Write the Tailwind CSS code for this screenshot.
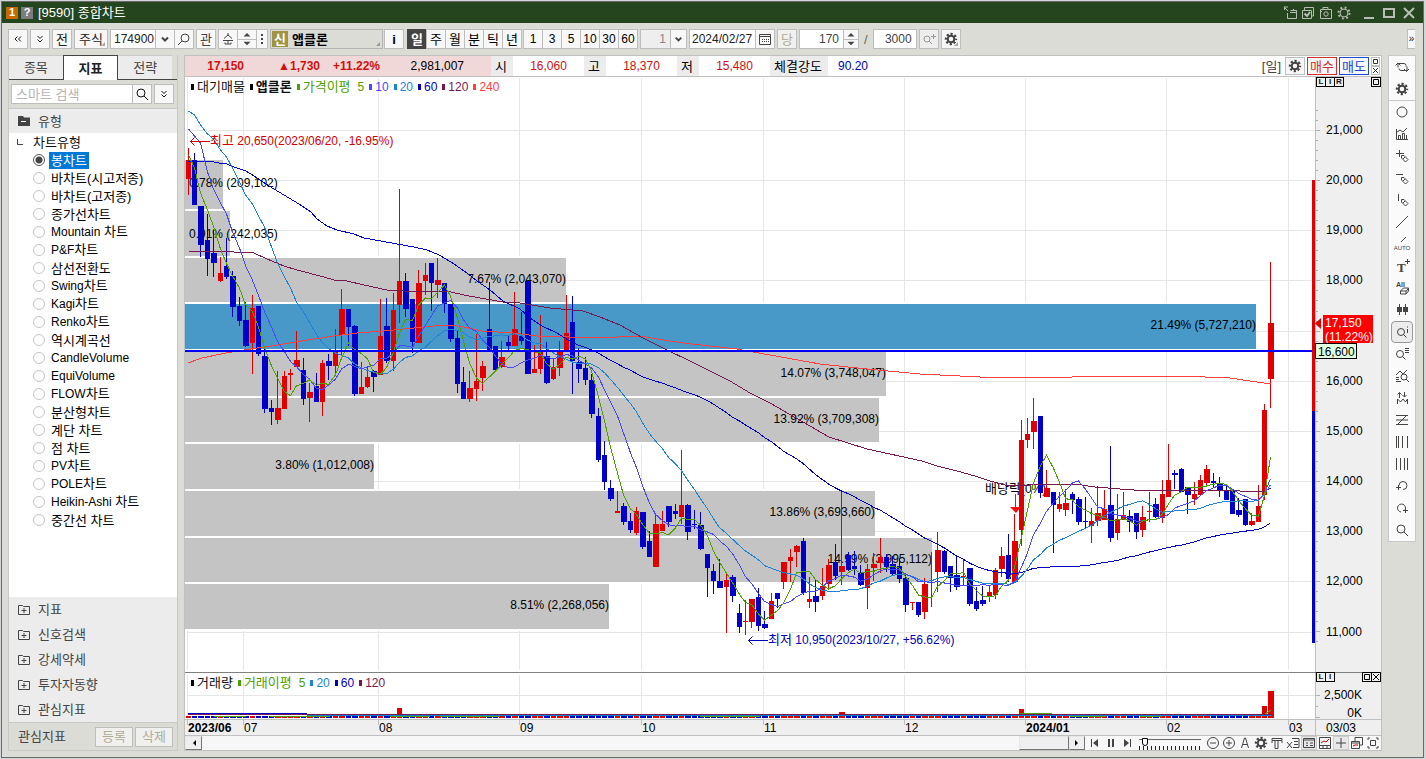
<!DOCTYPE html>
<html lang="ko">
<head>
<meta charset="utf-8">
<title>[9590] 종합차트</title>
<script src="https://cdn.jsdelivr.net/npm/@tailwindcss/browser@4"></script>
</head>
<body class="overflow-hidden bg-[#d3d6d8] font-['Liberation_Sans','Noto_Sans_CJK_KR',sans-serif] text-[13px] leading-none text-[#111]">

<svg width="0" height="0" class="absolute" aria-hidden="true">
  <defs>
    <symbol id="gear" viewBox="0 0 16 16"><g fill="none" stroke="currentColor"><circle cx="8" cy="8" r="3.3" stroke-width="2"/><circle cx="8" cy="8" r="5.1" stroke-width="2.2" stroke-dasharray="2.2 1.8" stroke-dashoffset="1.1"/></g></symbol>
    <symbol id="lens" viewBox="0 0 16 16"><g fill="none" stroke="currentColor"><circle cx="7" cy="7" r="4"/><path d="M10 10l4 4"/></g></symbol>
    <symbol id="pencil" viewBox="0 0 16 16"><path d="M7.500 7.500h2.500l4 4-2.500 2.500-4-4zM9 11l2-2" fill="none" stroke="currentColor"/></symbol>
    <symbol id="chev" viewBox="0 0 16 16"><path d="M5 6.500l3 3 3-3" fill="none" stroke="currentColor" stroke-width="2"/></symbol>
    <symbol id="dbl" viewBox="0 0 16 16"><path d="M5.500 5l2.500 2.500 2.500-2.500M5.500 8.500l2.500 2.500 2.500-2.500" fill="none" stroke="currentColor"/></symbol>
    <symbol id="dblL" viewBox="0 0 16 16"><path d="M7.500 5.500l-2.500 2.500 2.500 2.500M11 5.500l-2.500 2.500 2.500 2.500" fill="none" stroke="currentColor"/></symbol>
    <symbol id="updown" viewBox="0 0 16 20"><path d="M4 7l4-4 4 4zM4 13l4 4 4-4z" fill="currentColor"/></symbol>
    <symbol id="plusbox" viewBox="0 0 12 12"><path d="M.5 10.500v-9h4l1 1h6v8zM6 4v5M3.500 6.500h5" fill="none" stroke="currentColor"/></symbol>
  </defs>
</svg>

<div class="flex h-screen pb-px pl-px pr-0.5 pt-px">
<div class="flex min-w-0 flex-1 flex-col border border-[#6a6a6a] bg-[#dcdcd6]">

  <header class="flex h-[21px] shrink-0 items-center bg-[#25451e] pl-1 pr-2 text-white">
    <span class="flex h-3 w-3 items-center justify-center bg-[#c86a00] text-[11px] font-bold">1</span>
    <button class="ml-[3px] flex h-3 w-3 items-center justify-center bg-[#7c7c7c] text-[11px] font-bold" aria-label="도움말">?</button>
    <h1 class="ml-[5px]">[9590] 종합차트</h1>
    <div class="ml-auto flex items-center gap-1 text-[#b9bdb4]">
      <button aria-label="창 이동"><svg class="size-[14px]" viewBox="0 0 14 14" fill="none" stroke="currentColor"><path d="M4.500 7v5.500h9v-8h-6M7 6.500h6M10.500 4V3" /><path d="M1 1h4M1.500 1v3M1 1l4 4"/></svg></button>
      <button aria-label="선택"><svg class="size-[14px]" viewBox="0 0 14 14" fill="none" stroke="currentColor"><path d="M1.500 4.500h9v8h-9zM3.500 4V1.500h9V10H11"/><path d="M3.500 7.500l2.500 2.500 3-4" stroke-width="2"/></svg></button>
      <button aria-label="캡처"><svg class="size-[14px]" viewBox="0 0 14 14" fill="none" stroke="currentColor"><path d="M1.500 3.500h11v9h-11zM4 3V1.500h5V3M1 5.500h2"/><circle cx="7" cy="8" r="2.200"/></svg></button>
      <button aria-label="설정"><svg class="size-[14px]" viewBox="0 0 14 14" fill="none" stroke="currentColor"><circle cx="7" cy="7" r="4"/><circle cx="7" cy="7" r="5.500" stroke-width="2" stroke-dasharray="1.800 2.520"/></svg></button>
      <button class="ml-2" aria-label="최소화"><svg class="h-[14px] w-3" viewBox="0 0 12 14"><path d="M1 11h10v2H1z" fill="currentColor"/></svg></button>
      <button class="ml-1" aria-label="최대화"><svg class="h-[14px] w-3" viewBox="0 0 12 14"><path d="M1 3h10v8H1z" fill="none" stroke="currentColor" stroke-width="2"/></svg></button>
      <button class="ml-1" aria-label="닫기"><svg class="h-[14px] w-3" viewBox="0 0 12 14"><path d="M1 2l10 10M11 2L1 12" stroke="currentColor" stroke-width="2"/></svg></button>
    </div>
  </header>

  <div class="flex h-8 shrink-0 items-center gap-0.5 pl-1.5 pr-2 text-[#222]" role="toolbar" aria-label="종목 도구">
    <button class="flex h-5 w-5 items-center justify-center border border-[#bdbdbd] bg-[#f7f7f7]" aria-label="접기"><svg class="size-4"><use href="#dblL"/></svg></button>
    <button class="flex h-5 w-5 items-center justify-center border border-[#bdbdbd] bg-[#f7f7f7]" aria-label="펼치기"><svg class="size-4"><use href="#dbl"/></svg></button>
    <button class="flex h-5 w-5 items-center justify-center border border-[#bdbdbd] bg-[#f7f7f7]">전</button>
    <button class="relative flex h-5 w-[34px] items-center justify-center border border-[#bdbdbd] bg-[#f7f7f7]">주식<svg class="absolute bottom-0.5 right-0.5 size-1" viewBox="0 0 4 4"><path d="M4 0v4H0z" fill="#aaa"/></svg></button>
    <div class="flex">
      <input class="h-5 w-[46px] border border-[#bdbdbd] bg-white pl-[3px] text-xs" value="174900" aria-label="종목코드">
      <button class="-ml-px flex h-5 w-5 items-center justify-center border border-[#bdbdbd] bg-[#f7f7f7]" aria-label="종목 목록"><svg class="size-4 text-[#444]"><use href="#chev"/></svg></button>
      <button class="-ml-px flex h-5 w-5 items-center justify-center border border-[#bdbdbd] bg-[#f7f7f7]" aria-label="종목 검색"><svg class="size-4 -scale-x-100 text-[#444]"><use href="#lens"/></svg></button>
    </div>
    <button class="flex h-5 w-5 items-center justify-center border border-[#bdbdbd] bg-[#f7f7f7] text-[#444]">관</button>
    <div class="flex">
      <button class="flex h-5 w-5 items-center justify-center border border-[#bdbdbd] bg-[#f7f7f7]" aria-label="순환"><svg class="size-4" viewBox="0 0 16 16" fill="none" stroke="#444"><path d="M8 2v2L4 7.500M8 4l4 3.500M3 9.500h10M8 9.500V13M5 11.500v1.500h6v-1.500"/></svg></button>
      <button class="-ml-px flex h-5 w-5 items-center justify-center border border-[#bdbdbd] bg-[#f7f7f7] bg-[linear-gradient(#bdbdbd,#bdbdbd)] bg-[length:100%_1px] bg-center bg-no-repeat" aria-label="이전 다음"><svg class="h-[18px] w-3.5 text-[#444]"><use href="#updown"/></svg></button>
      <button class="-ml-px flex h-5 w-3 items-center justify-center border border-[#bdbdbd] bg-[#f7f7f7]" aria-label="더보기"><svg class="h-3.5 w-1" viewBox="0 0 4 14"><path d="M1 2h2v2H1zM1 6h2v2H1zM1 10h2v2H1z" fill="#444"/></svg></button>
    </div>
    <button class="relative flex h-5 w-[113px] items-center gap-1 border border-[#b4b4b4] bg-[#dcdcd6] pl-px font-bold text-black"><span class="flex h-4 w-4 items-center justify-center bg-[#a09440] text-white">신</span>앱클론<svg class="absolute bottom-0.5 right-0.5 size-1" viewBox="0 0 4 4"><path d="M4 0v4H0z" fill="#999"/></svg></button>
    <button class="-ml-px flex h-5 w-5 items-center justify-center border border-[#bdbdbd] bg-[#f7f7f7] font-bold text-black">i</button>
    <div class="ml-px flex text-black">
      <button class="flex h-5 w-5 items-center justify-center bg-[#444] font-bold text-white">일</button>
      <button class="-ml-px flex h-5 w-5 items-center justify-center border border-[#bdbdbd] bg-[#f7f7f7]">주</button>
      <button class="-ml-px flex h-5 w-5 items-center justify-center border border-[#bdbdbd] bg-[#f7f7f7]">월</button>
      <button class="-ml-px flex h-5 w-5 items-center justify-center border border-[#bdbdbd] bg-[#f7f7f7]">분</button>
      <button class="-ml-px flex h-5 w-5 items-center justify-center border border-[#bdbdbd] bg-[#f7f7f7]">틱</button>
      <button class="-ml-px flex h-5 w-5 items-center justify-center border border-[#bdbdbd] bg-[#f7f7f7]">년</button>
    </div>
    <div class="-ml-px flex text-xs text-black">
      <button class="flex h-5 w-5 items-center justify-center border border-[#bdbdbd] bg-[#f7f7f7]">1</button>
      <button class="-ml-px flex h-5 w-5 items-center justify-center border border-[#bdbdbd] bg-[#f7f7f7]">3</button>
      <button class="-ml-px flex h-5 w-5 items-center justify-center border border-[#bdbdbd] bg-[#f7f7f7]">5</button>
      <button class="-ml-px flex h-5 w-5 items-center justify-center border border-[#bdbdbd] bg-[#f7f7f7]">10</button>
      <button class="-ml-px flex h-5 w-5 items-center justify-center border border-[#bdbdbd] bg-[#f7f7f7]">30</button>
      <button class="-ml-px flex h-5 w-5 items-center justify-center border border-[#bdbdbd] bg-[#f7f7f7]">60</button>
    </div>
    <div class="flex">
      <input class="h-5 w-[31px] border border-[#bdbdbd] bg-[#eee] pr-1 text-right text-xs text-[#888]" value="1" aria-label="주기">
      <button class="-ml-px flex h-5 w-[17px] items-center justify-center border border-[#bdbdbd] bg-[#f7f7f7]" aria-label="주기 선택"><svg class="size-4 text-[#444]"><use href="#chev"/></svg></button>
    </div>
    <div class="flex">
      <input class="h-5 w-[67px] border border-[#bdbdbd] bg-white pl-0.5 text-xs" value="2024/02/27" aria-label="날짜">
      <button class="-ml-px flex h-5 w-5 items-center justify-center border border-[#bdbdbd] bg-[#f7f7f7]" aria-label="달력"><svg class="size-3.5" viewBox="0 0 14 14" fill="none" stroke="#444"><path d="M1.500 2.500h11v10h-11zM1 4.500h12"/><path d="M4 7.500h7M4 9.500h7" stroke-dasharray="1 1"/></svg></button>
    </div>
    <button class="flex h-5 w-5 items-center justify-center border border-[#bdbdbd] bg-[#f0f0ee] text-[#b0ac98]">당</button>
    <div class="flex">
      <input class="h-5 w-[45px] border border-[#bdbdbd] bg-white pr-1 text-right text-xs text-[#444]" value="170" aria-label="표시 개수">
      <button class="-ml-px flex h-5 w-4 items-center justify-center border border-[#bdbdbd] bg-[#f7f7f7] bg-[linear-gradient(#bdbdbd,#bdbdbd)] bg-[length:100%_1px] bg-center bg-no-repeat" aria-label="개수 조절"><svg class="h-[18px] w-3.5 text-[#444]"><use href="#updown"/></svg></button>
    </div>
    <span class="px-[3px] text-[#666]">/</span>
    <input class="h-5 w-11 border border-[#bdbdbd] bg-white pr-1 text-right text-xs text-[#444]" value="3000" aria-label="전체 개수">
    <button class="flex h-5 w-5 items-center justify-center border border-[#bdbdbd] bg-[#eee] text-[#999]" aria-label="확대"><svg class="size-4" viewBox="0 0 16 16" fill="none" stroke="currentColor"><circle cx="6" cy="8" r="3"/><path d="M8 10l3 3M12.500 3v5M10 5.500h5"/></svg></button>
    <button class="relative flex h-5 w-5 items-center justify-center border border-[#bdbdbd] bg-[#f7f7f7] text-[#444]" aria-label="설정"><svg class="size-4"><use href="#gear"/></svg><svg class="absolute bottom-0.5 right-0.5 size-1" viewBox="0 0 4 4"><path d="M4 0v4H0z" fill="#aaa"/></svg></button>
    <button class="ml-auto flex h-5 w-2 items-center justify-center overflow-hidden border border-r-0 border-[#bdbdbd] bg-[#f7f7f7] text-[10px]" aria-label="더보기">»</button>
  </div>

  <main class="flex min-h-0 flex-1 gap-1.5 pb-1.5 pl-1.5 pr-[7px]">

    <aside class="flex w-[170px] shrink-0 flex-col border-x border-b border-[#c8c8c8]">
      <nav class="flex h-[25px] shrink-0 border-b border-[#444] pr-[5px] text-[#444]" aria-label="탭">
        <button class="flex-1 border-t border-[#c8c8c8] bg-[#ececec]">종목</button>
        <button class="-mb-px flex-1 border border-b-0 border-[#444] bg-white font-bold text-[#222]">지표</button>
        <button class="flex-1 border-t border-[#c8c8c8] bg-[#ececec]">전략</button>
      </nav>
      <form class="flex h-[28px] shrink-0 items-center px-0.5">
        <input class="h-5 min-w-0 flex-1 border border-[#bdbdbd] bg-white pl-1 placeholder:text-[#b5b5b5]" placeholder="스마트 검색" aria-label="스마트 검색">
        <button type="button" class="-ml-px flex h-5 w-5 items-center justify-center border border-[#bdbdbd] bg-[#f7f7f7]" aria-label="검색"><svg class="size-4"><use href="#lens"/></svg></button>
        <button type="button" class="ml-0.5 mr-px flex h-5 w-5 items-center justify-center border border-[#bdbdbd] bg-[#f7f7f7]" aria-label="펼치기"><svg class="size-4"><use href="#dbl"/></svg></button>
      </form>
      <button class="flex h-[25px] shrink-0 items-center gap-2 border-t border-[#c8c8c8] bg-[#ececec] pl-[9px] text-[#444]"><svg class="size-3" viewBox="0 0 12 12"><path d="M0 1h5l1 1.500h6V11H0z" fill="#444"/><path d="M3 6.500h5" stroke="#fff"/></svg>유형</button>
      <fieldset class="min-h-0 flex-1 overflow-hidden bg-white">
        <div class="flex h-[18px] items-center pl-2"><svg class="mr-2.5 size-1.5" viewBox="0 0 6 6"><path d="M.5 0v5.500H6" fill="none" stroke="#444"/></svg>차트유형</div>
        <div id="types"></div>
      </fieldset>
      <div id="sections" class="shrink-0 bg-[#ececec] text-[#444]"></div>
      <div class="flex h-[28px] shrink-0 items-center gap-0.5 border-t border-[#c8c8c8] pl-[9px] pr-1 text-[#444]">
        <span class="mr-auto">관심지표</span>
        <button class="h-5 w-[38px] border border-[#bdbdbd] bg-[#f0f0ee] text-[#b0ac98]">등록</button>
        <button class="h-5 w-[38px] border border-[#bdbdbd] bg-[#f0f0ee] text-[#b0ac98]">삭제</button>
      </div>
    </aside>

    <section class="flex min-w-0 flex-1 flex-col border border-[#c0c0c0] bg-white">
      <div class="flex h-[21px] shrink-0 items-stretch border-b border-[#c0c0c0] text-black">
        <div class="flex w-[306px] items-center bg-[#f0d8d8] text-xs">
          <b class="w-[59px] text-right text-[#d01010]">17,150</b>
          <b class="ml-6 w-[52px] text-right text-[#d01010]">▲1,730</b>
          <b class="ml-2 w-[52px] text-right text-[#d01010]">+11.22%</b>
          <span class="w-[84px] text-right">2,981,007</span>
        </div>
        <span class="flex w-[22px] items-center bg-[#ececec] pl-1">시</span>
        <span class="flex w-[71px] items-center justify-center text-xs text-[#d01010]">16,060</span>
        <span class="flex w-[22px] items-center bg-[#ececec] pl-1">고</span>
        <span class="flex w-[71px] items-center justify-center text-xs text-[#d01010]">18,370</span>
        <span class="flex w-[22px] items-center bg-[#ececec] pl-1">저</span>
        <span class="flex w-[71px] items-center justify-center text-xs text-[#d01010]">15,480</span>
        <span class="flex w-[58px] items-center bg-[#ececec] pl-1">체결강도</span>
        <span class="flex w-[50px] items-center justify-center text-xs text-[#0000b8]">90.20</span>
        <div class="ml-auto flex items-center gap-0.5 pr-px">
          <span class="mr-0.5 text-[#444]">[일]</span>
          <button class="flex h-[18px] w-5 items-center justify-center border border-[#bdbdbd] bg-[#f7f7f7] text-[#444]" aria-label="차트 설정"><svg class="size-4"><use href="#gear"/></svg></button>
          <button class="h-[18px] w-[30px] border border-[#d03030] bg-[#f7f7f7] text-[#d03030]">매수</button>
          <button class="h-[18px] w-[30px] border border-[#2048d0] bg-[#f7f7f7] text-[#2048d0]">매도</button>
          <span class="flex flex-col">
            <button class="flex size-[9px] items-center justify-center border border-[#bdbdbd]" aria-label="최대화"><svg class="size-[5px]" viewBox="0 0 5 5"><path d="M.5.5h4v4h-4z" fill="none" stroke="#333"/></svg></button>
            <button class="flex size-[9px] items-center justify-center border border-[#bdbdbd]" aria-label="닫기"><svg class="size-[5px]" viewBox="0 0 5 5"><path d="M0 0l5 5M5 0L0 5" stroke="#333"/></svg></button>
          </span>
        </div>
      </div>

      <div class="relative min-h-0 flex-1">
        <svg id="chart" class="block h-full w-full" viewBox="185 77 1196 659" preserveAspectRatio="xMinYMin meet" font-size="12" role="img" aria-label="앱클론 일봉 차트"></svg>
        <div class="absolute left-1.5 top-px flex gap-[5px] text-xs">
          <span class="flex items-center gap-[3px] text-[13px]"><i class="h-1.5 w-[3px] bg-black"></i>대기매물</span>
          <span class="flex items-center gap-[3px] text-[13px] font-bold"><i class="h-1.5 w-[3px] bg-black"></i>앱클론</span>
          <span class="flex items-center gap-[3px] text-[#4da000]"><i class="h-1.5 w-[3px] bg-[#4da000]"></i><span class="text-[13px]">가격이평</span><span class="ml-1">5</span></span>
          <span class="flex items-center gap-[3px] text-[#4848ff]"><i class="h-1.5 w-[3px] bg-[#4848ff]"></i>10</span>
          <span class="flex items-center gap-[3px] text-[#1c84d8]"><i class="h-1.5 w-[3px] bg-[#1c84d8]"></i>20</span>
          <span class="flex items-center gap-[3px] text-[#0000c8]"><i class="h-1.5 w-[3px] bg-[#0000c8]"></i>60</span>
          <span class="flex items-center gap-[3px] text-[#781850]"><i class="h-1.5 w-[3px] bg-[#781850]"></i>120</span>
          <span class="flex items-center gap-[3px] text-[#ff4040]"><i class="h-1.5 w-[3px] bg-[#ff4040]"></i>240</span>
        </div>
        <div class="absolute left-1.5 top-[597px] flex gap-[5px] text-xs">
          <span class="flex items-center gap-[3px] text-[13px]"><i class="h-1.5 w-[3px] bg-black"></i>거래량</span>
          <span class="flex items-center gap-[3px] text-[#4da000]"><i class="h-1.5 w-[3px] bg-[#4da000]"></i><span class="text-[13px]">거래이평</span><span class="ml-1">5</span></span>
          <span class="flex items-center gap-[3px] text-[#1c84d8]"><i class="h-1.5 w-[3px] bg-[#1c84d8]"></i>20</span>
          <span class="flex items-center gap-[3px] text-[#0000c8]"><i class="h-1.5 w-[3px] bg-[#0000c8]"></i>60</span>
          <span class="flex items-center gap-[3px] text-[#781850]"><i class="h-1.5 w-[3px] bg-[#781850]"></i>120</span>
        </div>
        <div class="absolute right-0 top-0 flex w-[65px] text-[8px] font-bold">
          <button class="flex h-[10px] w-[10px] items-center justify-center border border-black bg-[#efefef]">L</button>
          <button class="-ml-px flex h-[10px] w-[10px] items-center justify-center border border-black bg-[#efefef]">I</button>
          <button class="-ml-px flex h-[10px] w-[10px] items-center justify-center border border-black bg-[#efefef]">R</button>
          <button class="ml-auto flex size-[10px] items-center justify-center border border-black" aria-label="확대"><svg class="size-1.5" viewBox="0 0 6 6"><path d="M.5.5h5v5h-5z" fill="none" stroke="#000"/></svg></button>
        </div>
        <div class="absolute right-0 top-[595px] flex w-[65px] text-[8px] font-bold">
          <button class="flex h-[10px] w-[10px] items-center justify-center border border-black bg-[#efefef]">L</button>
          <button class="-ml-px flex h-[10px] w-[10px] items-center justify-center border border-black bg-[#efefef]">I</button>
          <button class="ml-auto flex size-[10px] items-center justify-center border border-black" aria-label="확대"><svg class="size-1.5" viewBox="0 0 6 6"><path d="M.5.5h5v5h-5z" fill="none" stroke="#000"/></svg></button>
          <button class="-ml-px flex size-[10px] items-center justify-center border border-black" aria-label="닫기"><svg class="size-1.5" viewBox="0 0 6 6"><path d="M0 0l6 6M6 0L0 6" stroke="#000"/></svg></button>
        </div>
      </div>

      <div class="flex h-[14px] shrink-0 items-stretch bg-[#f7f7f7] text-[#444]">
        <button class="flex w-[17px] items-center justify-center border border-[#e8e8e8] border-b-[#777] border-r-[#777] bg-[#efefef]" aria-label="왼쪽"><svg class="size-2" viewBox="0 0 8 8"><path d="M6 1v6L3 4z" fill="#000"/></svg></button>
        <div class="flex flex-1 justify-end bg-[#f7f7f7]"><div class="w-[50px] border border-[#e8e8e8] border-b-[#777] border-r-[#777] bg-[#efefef]"></div></div>
        <button class="flex w-4 items-center justify-center border border-[#e8e8e8] border-b-[#777] border-r-[#777] bg-[#efefef]" aria-label="오른쪽"><svg class="size-2" viewBox="0 0 8 8"><path d="M2 1v6l3-3z" fill="#000"/></svg></button>
        <div class="flex items-center gap-2 pl-1.5">
          <button aria-label="처음"><svg class="h-2 w-2" viewBox="0 0 8 8"><path d="M.5 0v8" stroke="#444"/><path d="M7 0v8L2 4z" fill="#444"/></svg></button>
          <button aria-label="일시정지"><svg class="h-2 w-2" viewBox="0 0 8 8"><path d="M1 0h2v8H1zM5 0h2v8H5z" fill="#444"/></svg></button>
          <button aria-label="끝"><svg class="h-2 w-2" viewBox="0 0 8 8"><path d="M7.500 0v8" stroke="#444"/><path d="M1 0v8l5-4z" fill="#444"/></svg></button>
        </div>
        <div class="ml-2 flex w-[62px] flex-col pt-0.5">
          <input type="range" value="6" aria-label="봉 간격" class="h-2 w-full appearance-none bg-[linear-gradient(#666,#666)] bg-[length:100%_1px] bg-[position:0_1px] bg-no-repeat [&::-webkit-slider-thumb]:h-2 [&::-webkit-slider-thumb]:w-[6px] [&::-webkit-slider-thumb]:appearance-none [&::-webkit-slider-thumb]:rounded-b-[3px] [&::-webkit-slider-thumb]:border [&::-webkit-slider-thumb]:border-black [&::-webkit-slider-thumb]:bg-white">
          <div class="h-1 bg-[repeating-linear-gradient(90deg,#222_0_1px,transparent_1px_4px)]"></div>
        </div>
        <div class="flex items-center pl-1" id="footIcons"></div>
      </div>
    </section>

    <div id="tools" class="flex w-7 shrink-0 flex-col self-start border border-[#c8c8c8] bg-[#fafafa] text-[#444]" role="toolbar" aria-label="그리기 도구"></div>
  </main>
</div>
</div>

<script>
// Latin runs are set one step smaller than Hangul.
const mix = t => t.replace(/&/g, '&amp;').replace(/[A-Za-z][A-Za-z&;\-]*/g, m => `<span class="text-xs">${m}</span>`);

const types = ['봉차트','바차트(시고저종)','바차트(고저종)','종가선차트','Mountain 차트','P&F차트','삼선전환도','Swing차트','Kagi차트','Renko차트','역시계곡선','CandleVolume','EquiVolume','FLOW차트','분산형차트','계단 차트','점 차트','PV차트','POLE차트','Heikin-Ashi 차트','중간선 차트'];
document.getElementById('types').innerHTML = types.map((t, i) => `
  <label class="flex h-[18px] items-center pl-6 text-black">
    <input type="radio" name="type" ${i ? '' : 'checked'} class="mr-1 size-3 appearance-none rounded-full border border-[#c4c4c4] bg-white checked:border-[#555] checked:bg-[radial-gradient(circle,#444_0_3px,#fff_4px)]">
    <span class="${i ? 'px-0.5 whitespace-nowrap' : 'bg-[#0078d7] px-0.5 py-0.5 text-white whitespace-nowrap'}">${mix(t)}</span>
  </label>`).join('');

document.getElementById('sections').innerHTML = ['지표','신호검색','강세약세','투자자동향','관심지표'].map(t =>
  `<button class="flex h-[25px] w-full items-center gap-2 pl-[9px]"><svg class="size-3"><use href="#plusbox"/></svg>${t}</button>`).join('');

const tools = [
  ['초기화','<path d="M4 8.500V4.500h6a2 2 0 0 1 2 2v1M1.500 6.500L4 4l2.500 2.500M13 7.500v4H7a2 2 0 0 1-2-2M15 10l-2.500 2.500L10 10"/>'],
  ['설정','<use href="#gear"/>'],
  ['원','<circle cx="8" cy="8" r="5"/>'],
  ['지표 차트','<path d="M2.500 3v10.500H14M4.500 13V9.500h2V13M8.500 13V7.500h2V13M12.500 13V9M3 6l3-2 3 2 4-4"/>'],
  ['십자선','<path d="M2 5.500h8M5.500 2v7"/><use href="#pencil"/>'],
  ['수평선','<path d="M2 4.500h7"/><use href="#pencil"/>'],
  ['수직선','<path d="M4.500 2v7"/><use href="#pencil"/>'],
  ['추세선','<path d="M2 14L14 2"/>'],
  ['자동추세','<path d="M7 6l5-5"/><text x="8" y="14" text-anchor="middle" font-size="6" fill="currentColor" stroke="none">AUTO</text>'],
  ['문자','<text x="3" y="14" font-size="13" fill="currentColor" stroke="none" font-family="Liberation Serif" font-weight="bold">T</text><path d="M13.500 1v5M11 3.500h5"/>'],
  ['전체 삭제','<text x="2" y="7" font-size="7" fill="currentColor" stroke="none" font-weight="bold">All</text><path d="M6.500 11l3-3h5l-2 3h-6v3h5.500l2.500-3V8M12 11v3"/>'],
  ['캔들','<path d="M5.500 2v11M11.500 2v11"/><path d="M3 5h5v5H3zM9 5h5v5H9z" fill="currentColor" stroke="none"/>'],
  ['정보','<circle cx="7" cy="8" r="3.500"/><path d="M9.500 10.500l3 3M13.500 5v4M13.500 2.500v1"/>'],
  ['목록 조회','<circle cx="6" cy="8" r="3.500"/><path d="M8.500 10.500l3 3M11 2.500h4M11 4.500h4M11 6.500h4"/>'],
  ['패턴 검색','<path d="M2 7l4-4 3 3 4-4M2 9.500h3M2 11.500h3M2 13.500h5"/><circle cx="10" cy="9" r="3"/><path d="M12 11l3 3"/>'],
  ['신호','<path d="M5.500 8V2.500M3.500 4.500l2-2 2 2M10.500 2v5M8.500 5l2 2 2-2M3.500 14V9l3 3 2.500-3 2.500 3 2-3v5"/>'],
  ['피보나치','<path d="M2 3.500h12M2 8h12M2 12.500h12M12 4L4 12"/>'],
  ['시간대','<path d="M2.500 2v12M4.500 2v12M8.500 2v12M13.500 2v12"/>'],
  ['등간격','<path d="M2.500 2v12M6.500 2v12M10.500 2v12M13.500 2v12"/>'],
  ['되돌리기','<path d="M5 7.500a4 4 0 1 1 4 4M2 9.500h5M4.500 7v5"/>'],
  ['다시하기','<path d="M11 10a4 4 0 1 0-4 2M9 10.500h5M11.500 8v5"/>'],
  ['돋보기','<use href="#lens"/>']
];
document.getElementById('tools').innerHTML = tools.map(([n, p], i) =>
  `${i === 2 ? '<div class="h-px bg-[#c8c8c8]"></div>' : ''}<button aria-label="${n}" class="${i === 12 ? 'mx-0.5 flex h-[22px] items-center justify-center rounded border border-[#999] bg-[#ececec]' : 'flex h-[22px] items-center justify-center'}"><svg class="size-4 overflow-visible" viewBox="0 0 16 16" fill="none" stroke="currentColor">${p}</svg></button>`).join('');

const foot = [
  ['축소','<circle cx="8" cy="8" r="5.500"/><path d="M5 8h6"/>'],
  ['확대','<circle cx="8" cy="8" r="5.500"/><path d="M5 8h6M8 5v6"/>'],
  ['글자','<path d="M4.500 13L7.500 3h1l3 10M6 9.500h4"/>'],
  ['설정','<use href="#gear" width="16" height="16"/>'],
  ['도구','<path d="M3 3.500h10v2H3zM6 6v7.500h3V6M13 6v2M3 6v2"/>'],
  ['엑셀','<path d="M7 3.500h7v9H8M9 6.500h4M9 9.500h4M2 7l5 6M7 7l-5 6"/>'],
  ['표','<path d="M2.500 3.500h11v9h-11zM3 5h10M5 8h2M5 10.500h2M9 8h3M9 10.500h3"/>'],
  ['차트','<path d="M2.500 2.500h11v11h-11zM3 10.500h10M6 11v2M10 11v2"/><path d="M4 8l3-2 2 1 3-3" stroke="#c00"/>'],
  ['십자','<path d="M3 8h10M8 3v10"/>'],
  ['창','<path d="M2.500 6.500h8v7h-8zM3 8h8M6 6V2.500h7.500V10H11"/><path d="M4 11l2-1 3 0" stroke="#c00"/>'],
  ['전체화면','<path d="M5.500 5.500h5v5h-5zM3 5V3h2M11 3h2v2M13 11v2h-2M5 13H3v-2"/>']
];
document.getElementById('footIcons').innerHTML = foot.map(([n, p], i) =>
  `<button aria-label="${n}" class="${i === 6 || i === 8 ? 'flex h-[14px] w-4 items-center justify-center border border-[#ccc] bg-[#e8e8e8]' : 'flex h-[14px] w-4 items-center justify-center'}"><svg class="h-[14px] w-[14px] shrink-0" viewBox="1 1 14 14" fill="none" stroke="currentColor">${p}</svg></button>`).join('');

// Candles: direction (r = up, b = down), high, body top, body bottom, low.
const candles = `r148 160 179 195,b153 160 205 205,b206 206 245 257,b214 240 259 276,b230 253 263 277,r257 273 281 282,b238 266 277 279,b271 276 307 317,b297 306 321 326,b302 320 346 347,r295 308 343 374,b306 306 354 356,b347 356 409 413,b400 408 412 425,r371 408 420 424,r371 376 409 409,r369 373 375 390,r331 360 367 367,b358 370 399 405,r383 392 398 422,b373 386 402 402,r360 363 402 416,b354 361 366 380,r329 351 366 375,r289 309 335 355,b309 309 327 346,b325 326 394 396,r362 387 394 394,r366 377 387 388,b370 371 377 392,r299 336 375 375,b298 326 361 363,r293 310 361 371,r189 281 305 323,b273 281 309 317,b299 299 342 353,r270 283 343 343,r263 275 281 295,b263 263 283 311,r258 280 285 298,b283 283 304 313,b304 304 339 342,b331 338 384 393,b367 382 399 399,r371 388 399 402,r334 381 389 401,r361 366 378 391,b282 329 350 351,b346 346 370 370,r341 357 367 368,b335 342 346 350,r292 329 346 346,b312 336 341 345,b280 281 374 374,r345 369 373 373,r315 352 369 374,b342 356 383 384,r358 367 379 380,r341 351 368 376,r295 333 350 350,b296 322 361 394,b348 362 369 383,b357 368 380 385,b374 380 414 418,b408 416 460 462,b441 455 482 490,b480 488 499 501,r491 511 513 513,b503 506 522 525,b513 521 530 533,r507 511 533 535,b512 512 547 549,b531 541 557 557,r514 524 567 567,r511 524 531 531,b506 506 522 527,b504 511 514 519,r450 505 517 524,b504 505 532 540,b510 524 525 529,b512 525 549 550,b554 554 568 597,b564 571 581 594,b559 581 588 588,r573 580 587 633,b575 577 596 602,b604 613 627 633,r600 621 622 635,r599 599 622 628,b588 597 626 631,b611 624 628 629,r593 601 619 619,b593 593 599 608,r562 562 582 589,r549 557 561 582,r545 546 552 567,b538 541 593 595,r577 599 602 608,b580 596 602 612,r568 586 596 600,r559 565 584 590,b544 562 576 580,r491 566 572 585,b552 555 570 571,b551 566 569 575,b565 573 585 586,r564 569 588 609,r553 564 568 581,r538 557 563 573,b554 557 567 572,b556 564 574 576,b558 566 579 583,b575 578 605 612,r602 602 603 610,b602 602 615 617,r578 584 612 619,r552 582 583 607,r532 550 572 592,b550 551 572 574,b566 566 578 592,b555 575 587 590,r559 576 577 586,b568 568 604 606,b587 601 609 611,b586 600 604 606,r586 592 597 602,r568 570 595 599,r547 556 569 577,b534 555 579 582,r514 541 582 582,r420 440 530 546,r418 434 440 448,r398 421 432 449,b416 416 493 498,r470 488 497 497,b492 492 505 553,r492 504 509 512,r489 503 510 516,b492 494 500 514,b497 499 522 525,b497 521 522 529,r508 521 526 543,r486 513 521 526,r490 509 520 520,b446 505 538 542,r494 519 533 540,r492 515 520 520,b510 516 522 532,b513 513 532 539,r506 517 530 537,r492 511 512 522,b498 504 517 518,r480 494 518 523,r444 480 497 497,b470 473 475 489,b468 469 492 492,b487 487 495 514,r482 494 499 505,r475 480 495 495,r465 469 483 485,b473 481 483 487,b477 483 490 497,b484 490 500 500,b491 491 514 514,b498 510 515 517,b499 499 525 526,r513 521 525 526,r485 506 522 522,r404 410 495 500,r262 323 379 408`
  .split(',').map(s => [s[0], ...s.slice(1).split(' ').map(Number)]);
const left = i => Math.floor(186 + i * 6.408);
const mid = i => left(i) + 2.5;
const close = candles.map(c => c[0] === 'r' ? c[2] : c[3]);

const out = [];
const rect = (x, y, w, h, f, more = '') => out.push(`<rect x="${x}" y="${y}" width="${w}" height="${h}" fill="${f}" ${more}/>`);
const text = (x, y, s, more = '') => out.push(`<text x="${x}" y="${y}" ${more}>${s}</text>`);

// Panes, grid and axis backgrounds
rect(185, 77, 1130, 660, '#fff');
const months = [187, 243, 378, 519, 641, 763, 904, 1025, 1166, 1288];
const prices = [[130,'21,000'],[180,'20,000'],[230,'19,000'],[280,'18,000'],[331,''],[381,'16,000'],[431,'15,000'],[481,'14,000'],[531,'13,000'],[581,'12,000'],[632,'11,000']];
months.forEach(x => { rect(x, 78, 1, 592, '#e6e6e6'); rect(x, 675, 1, 44, '#e6e6e6'); });
prices.forEach(([y]) => rect(187, y, 1128, 1, '#e6e6e6'));
rect(187, 695, 1128, 1, '#e6e6e6');

// Volume-at-price profile
[[160,49,223,'0.78% (209,102)'],[211,46,230,'0.91% (242,035)'],[258,44,566,'7.67% (2,043,070)'],[304,45,1256,'21.49% (5,727,210)'],[352,44,886,'14.07% (3,748,047)'],[398,44,879,'13.92% (3,709,308)'],[444,45,374,'3.80% (1,012,008)'],[491,45,875,'13.86% (3,693,660)'],[538,44,932,'14.99% (3,995,112)'],[584,45,609,'8.51% (2,268,056)']].forEach(([y, h, x, s], i) => {
  rect(185, y - 2, x - 185, h + 4, '#fff');
  rect(185, y, x - 185, h, i === 3 ? '#4898c8' : '#c4c4c4');
  if (i < 2) text(189, y + 27, s); else text(x, y + 25, s, 'text-anchor="end"');
});

text(985, 493, '<tspan font-size="13">배당락</tspan>(0%)');

candles.forEach(([d, h, t, b, l], i) => {
  const x = left(i), w = left(i + 1) - x - 1, f = d === 'r' ? '#e00000' : '#0000c8';
  rect(x + 2, h, 1, l - h, f);
  rect(x, t, w, Math.max(1, b - t), f);
});

// Moving averages: leading points first, then the average of the closes
const sma = n => close.map((_, i) => i < n - 1 ? null : [mid(i), close.slice(i - n + 1, i + 1).reduce((a, b) => a + b) / n]).filter(Boolean);
const lead = ys => ys.map((y, i) => [mid(i), y]);
const line = (pts, c) => out.push(`<polyline points="${pts.map(p => p.join(' ')).join(' ')}" fill="none" stroke="${c}" shape-rendering="crispEdges"/>`);
const m240 = [[188,363],[202,358],[221,354],[237,351],[271,346],[301,341],[334,336],[357,333],[384,331],[414,328],[434,326],[451,325],[464,327],[482,331],[513,333],[537,336],[570,337],[617,337],[640,336],[657,339],[683,343],[710,346],[737,349],[753,352],[770,355],[820,364],[867,369],[920,374],[980,377],[1020,377],[1045,378],[1100,376],[1180,376],[1230,378],[1250,381],[1271,384]];
const m120 = [[188,251],[234,252],[254,253],[267,259],[284,266],[297,270],[324,277],[334,280],[347,281],[364,285],[387,290],[404,291],[451,292],[464,295],[480,298],[503,302],[520,303],[550,308],[583,311],[600,317],[620,325],[643,338],[667,350],[690,361],[710,371],[730,381],[750,393],[770,403],[829,437],[867,449],[922,461],[937,466],[957,471],[975,476],[990,481],[1005,485],[1013,486],[1030,485],[1045,484],[1075,484],[1095,487],[1120,489],[1147,491],[1200,490],[1240,491],[1258,492],[1265,491],[1271,488]];
const m60 = [[188,162],[209,161],[219,163],[227,164],[234,167],[246,171],[254,176],[269,186],[284,195],[299,204],[311,212],[317,219],[327,226],[337,230],[354,234],[364,238],[381,241],[397,244],[414,247],[427,250],[439,255],[451,262],[467,273],[477,281],[490,290],[503,301],[520,309],[530,318],[542,326],[557,333]];
line(m240, '#ff4040');
line(m120, '#781850');
line([...m60, ...sma(60)], '#0000c8');
line([...lead([111,115,125,134,139,150,157,168,182,195,204,216,227,247,263,277,288,302,312]), ...sma(20)], '#1c84d8');
line([...lead([129,136,143,172,189,203,214,232,248]), ...sma(10)], '#4848ff');
line([...lead([155,168,193,210]), ...sma(5)], '#4da000');

// Reference price and range bar
rect(185, 350, 1130, 2, '#0000ff');
rect(1312, 180, 3, 231, '#e00000');
rect(1312, 411, 3, 232, '#0000c8');

// High, low and ex-dividend marks
out.push('<path d="M190.500 141.500H210M194.500 137.500l-4 4 4 4" fill="none" stroke="#d00000"/>');
text(210, 145, '<tspan font-size="13">최고</tspan> 20,650(2023/06/20, -16.95%)', 'fill="#d00000"');
out.push('<path d="M748.500 640.500H768M752.500 636.500l-4 4 4 4" fill="none" stroke="#0000b8"/>');
text(768, 644, '<tspan font-size="13">최저</tspan> 10,950(2023/10/27, +56.62%)', 'fill="#0000b8"');
out.push('<path d="M1010 507h11l-5 6z" fill="#f01010"/><path d="M1015.500 494v14" stroke="#f01010"/>');

// Volume pane
rect(185, 672, 1196, 1, '#808080');
const vol = { 33: 708, 34: 714, 35: 714, 102: 712, 129: 714, 130: 709, 131: 714, 132: 714, 144: 714, 153: 714, 168: 706, 169: 691 };
candles.forEach(([d], i) => {
  const x = left(i), y = vol[i] || 716;
  rect(x, y, left(i + 1) - x - 1, 718 - y, d === 'r' ? '#e00000' : '#0000c8');
});
rect(188, 713, 119, 1, '#0000c8');
rect(188, 714, 1084, 1, '#781850');
rect(307, 715, 965, 1, '#0080d8');
[[214,32],[270,60],[390,40],[440,60],[700,60],[1070,36],[1140,22]].forEach(([x, w]) => rect(x, 716, w, 1, '#4da000'));
line([[1020,714],[1036,713],[1045,713],[1052,714]], '#4da000');
line([[1265,714],[1271,710]], '#4da000');

// Date axis
rect(185, 719, 1196, 18, '#efefef');
rect(185, 719, 1196, 1, '#c0c0c0');
rect(185, 735, 1196, 1, '#c0c0c0');
months.forEach(x => rect(x, 720, 1, 5, '#c0c0c0'));
['2023/06','07','08','09','10','11','12','2024/01','02','03'].forEach((s, i) =>
  text(months[i] + 1, 732, s, s.length > 2 ? 'font-weight="bold"' : ''));

// Price axis
rect(1315, 77, 66, 642, '#efefef');
rect(1315, 77, 1, 660, '#c0c0c0');
for (let y = 110; y < 650; y += 10) rect(1316, y + (y > 300 ? 1 : 0), y % 50 === 30 ? 4 : 2, 1, '#b0b0b0');
rect(1315, 672, 66, 1, '#808080');
rect(1316, 695, 4, 1, '#b0b0b0');
rect(1316, 706, 2, 1, '#b0b0b0');
rect(1316, 717, 4, 1, '#b0b0b0');
prices.forEach(([y, s]) => text(1326, y + 4, s));
text(1362, 699, '2,500K', 'text-anchor="end"');
text(1362, 717, '0K', 'text-anchor="end"');
text(1326, 732, '03/03');

rect(1323, 315, 50, 28, '#f00');
text(1325, 327, '17,150', 'fill="#fff"');
text(1325, 341, '(11.22%)', 'fill="#fff"');
out.push('<path d="M1321 318v11l-6-5.500z" fill="#e00000"/>');
rect(1315.5, 343.5, 41, 15, '#e0ffe0', 'stroke="#000"');
text(1318, 356, '16,600');

document.getElementById('chart').innerHTML = out.join('');
</script>
</body>
</html>
